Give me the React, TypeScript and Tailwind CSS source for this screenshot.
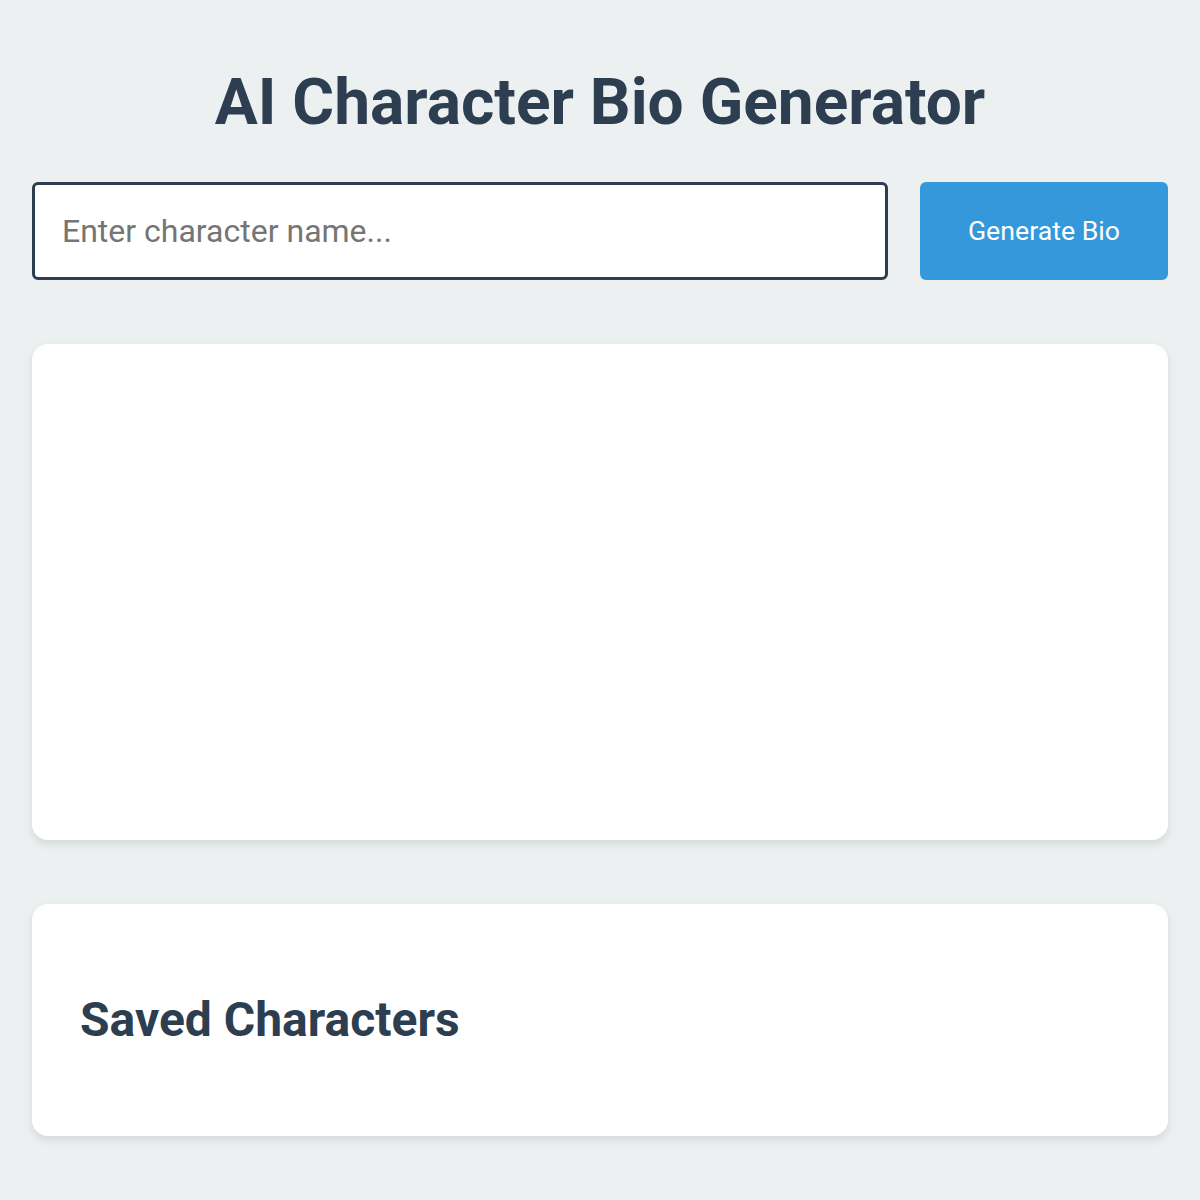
import React from "react";

export default function App() {
  return (
    <div className="min-h-[1200px] bg-[#ecf0f1] px-[32px] pt-[65px] pb-[32px] font-['Roboto',sans-serif] text-[#2c3e50]">
      <h1 className="text-center text-[64px] font-bold leading-[1.2] mb-[40px]">AI Character Bio Generator</h1>
      <div className="flex gap-[32px] mb-[64px]">
        <input
          type="text"
          placeholder="Enter character name..."
          className="flex-1 h-[98px] border-[3px] border-[#2c3e50] rounded-[6px] bg-white px-[27px] text-[32px] text-[#2c3e50] placeholder:text-[#757575] outline-none"
        />
        <button className="w-[248px] h-[98px] bg-[#3498db] text-white rounded-[6px] text-[26.7px]">Generate Bio</button>
      </div>
      <div className="bg-white rounded-[16px] shadow-[0_4px_8px_rgba(0,0,0,0.1)] h-[496px] mb-[64px]"></div>
      <div className="bg-white rounded-[16px] shadow-[0_4px_8px_rgba(0,0,0,0.1)] h-[232px] px-[48px] flex items-center">
        <h2 className="text-[48px] font-bold leading-[1.2]">Saved Characters</h2>
      </div>
    </div>
  );
}
